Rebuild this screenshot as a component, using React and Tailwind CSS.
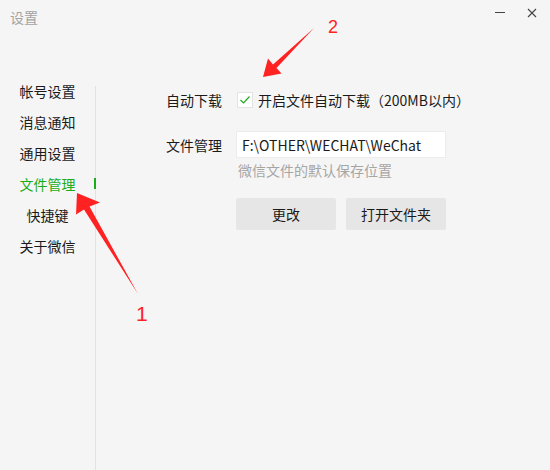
import React, { useState } from "react";

const menuItems = ["帐号设置", "消息通知", "通用设置", "文件管理", "快捷键", "关于微信"];

const App = () => {
  const [active, setActive] = useState("文件管理");
  const [autoDownload, setAutoDownload] = useState(true);

  return (
    <div className="relative w-[550px] h-[470px] overflow-hidden bg-[#f5f5f5] text-[14px] text-[#1a1a1a] font-['Noto_Sans_CJK_SC',sans-serif]">
      {/* Title bar */}
      <div className="flex items-start justify-between h-[75px]">
        <div className="pl-[10px] pt-[7px] leading-[20px] text-[#a3a3a3]">设置</div>
        <div className="flex items-center gap-[22px] pr-[13px] pt-[6px]">
          <svg width="10" height="12" viewBox="0 0 10 12">
            <path d="M0 6.5 H10" stroke="#444" strokeWidth="1" />
          </svg>
          <svg width="10" height="10" viewBox="0 0 10 10" className="mt-[1px]">
            <path d="M1 1 L9 9 M9 1 L1 9" stroke="#444" strokeWidth="1.1" />
          </svg>
        </div>
      </div>

      {/* Body */}
      <div className="flex h-[395px]">
        {/* Sidebar */}
        <div className="flex flex-col w-[95px]">
          {menuItems.map((item) => (
            <div
              key={item}
              onClick={() => setActive(item)}
              className={`relative flex items-center justify-center h-[31px] leading-[20px] cursor-pointer ${
                active === item ? "text-[#1aad19]" : "text-[#1a1a1a]"
              }`}
            >
              {item}
              {active === item && (
                <span className="absolute right-[-1px] top-[10px] w-[2px] h-[11px] bg-[#1aad19]" />
              )}
            </div>
          ))}
        </div>
        <div className="w-px mt-[11px] bg-[#e2e2e2]" />

        {/* Content */}
        <div className="flex flex-col pl-[70px] pt-[15px]">
          <div className="flex items-center h-[20px]">
            <div className="w-[70px] leading-[20px]">自动下载</div>
            <div
              onClick={() => setAutoDownload(!autoDownload)}
              className="flex items-center justify-center w-[16px] h-[16px] ml-[1px] bg-white border border-[#e3e3e3] cursor-pointer"
            >
              {autoDownload && (
                <svg width="12" height="10" viewBox="0 0 12 10">
                  <path d="M1.5 5 L4.5 8 L10.5 1.5" fill="none" stroke="#1aad19" strokeWidth="1.2" />
                </svg>
              )}
            </div>
            <div className="ml-[5px] leading-[20px]">开启文件自动下载（200MB以内）</div>
          </div>

          <div className="flex items-start mt-[21px]">
            <div className="w-[70px] leading-[20px] pt-[4px]">文件管理</div>
            <div className="flex flex-col">
              <div className="flex items-center w-[210px] h-[27px] pl-[5px] bg-white border border-[#ececec] leading-[20px] text-[#1a1a1a]">
                F:\OTHER\WECHAT\WeChat
              </div>
              <div className="mt-[2px] pl-[2px] leading-[20px] text-[#a6a6a6]">微信文件的默认保存位置</div>
            </div>
          </div>

          <div className="flex gap-[10px] mt-[18px] ml-[70px]">
            <button className="w-[100px] h-[32px] rounded-[2px] bg-[#e6e6e6] leading-[20px] text-[#1a1a1a]">更改</button>
            <button className="w-[100px] h-[32px] rounded-[2px] bg-[#e6e6e6] leading-[20px] text-[#1a1a1a]">打开文件夹</button>
          </div>
        </div>
      </div>

      {/* Annotation overlay */}
      <svg className="absolute left-0 top-0 pointer-events-none" width="550" height="470" viewBox="0 0 550 470">
        <polygon points="77,193 100,202.5 89.5,206.5 138,294 84,209.5 76,214.5" fill="#f22" />
        <polygon points="263,77 268,58.5 273,64.5 314,28 276.5,68 281.5,73.5" fill="#f22" />
      </svg>
      <div className="absolute left-[136px] top-[302px] text-[21px] leading-[24px] text-[#f22] font-['Liberation_Sans',sans-serif]">1</div>
      <div className="absolute left-[328px] top-[16px] text-[18px] leading-[22px] text-[#f22] font-['Liberation_Sans',sans-serif]">2</div>
    </div>
  );
};

export default App;
